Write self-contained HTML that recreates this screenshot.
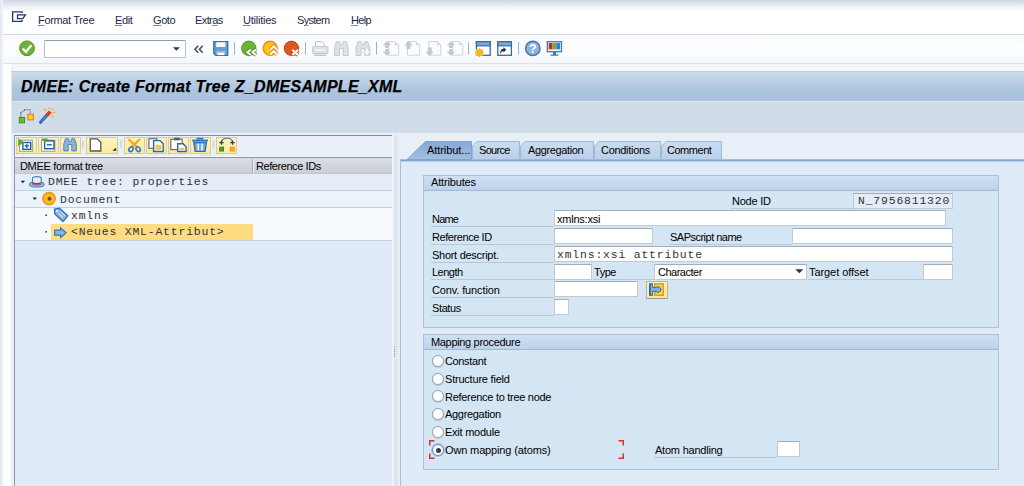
<!DOCTYPE html>
<html>
<head>
<meta charset="utf-8">
<title>DMEE: Create Format Tree Z_DMESAMPLE_XML</title>
<style>
html,body{margin:0;padding:0;}
body{width:1024px;height:486px;overflow:hidden;position:relative;background:#fff;font-family:"Liberation Sans",sans-serif;font-size:11px;color:#000;}
.abs{position:absolute;}
#menubar{left:0;top:0;width:1024px;height:35px;background:linear-gradient(#ced6e5 0px,#dce2ed 3px,#eff2f7 7px,#fff 12px,#fff 100%);}
#menubar .mi{position:absolute;top:14px;font-size:11px;line-height:13px;color:#1c2b4a;white-space:nowrap;}
#menubar u{text-decoration:underline;text-decoration-color:#7d88a3;text-underline-offset:1px;text-decoration-thickness:1px;}
#toolbar{left:0;top:34px;width:1024px;height:30px;background:linear-gradient(#f6f8fb 0,#fefefe 35%,#fbfcfd 70%,#f2f5f9 100%);border-top:1px solid #d3dbe7;border-bottom:1px solid #dde3ec;box-sizing:border-box;}
#leftedge{left:0;top:0;width:4px;height:486px;background:linear-gradient(to right,#dfe5ee,#eef1f6 50%,rgba(255,255,255,0));}
#gap{left:0;top:64px;width:1024px;height:7px;background:linear-gradient(#f1f4f9,#f6f8fb);}
#titlebar{left:11px;top:71px;width:1013px;height:30px;background:linear-gradient(#cfdded 0,#b9cde4 35%,#adc4de 65%,#aac2dd 100%);border-top:1px solid #bccbdd;border-left:1px solid #dde6f0;box-sizing:border-box;}
#title{left:21px;top:78px;font-size:16px;font-weight:bold;font-style:italic;line-height:18px;white-space:nowrap;color:#000;-webkit-text-stroke:0.25px #000;}
#apptb{left:11px;top:101px;width:1013px;height:32px;background:#d0dde9;border-left:1px solid #e3eaf2;border-top:1px solid #dbe5ef;box-sizing:border-box;}
#main{left:11px;top:133px;width:1013px;height:353px;background:#e9eff7;}
#leftwhite{left:2px;top:64px;width:9px;height:422px;background:#fff;}
/* left tree container */
#treebox{left:14px;top:135px;width:379px;height:351px;border-left:1px solid #8a9bb0;border-top:1px solid #7b8da4;box-sizing:border-box;background:#e1ebf7;}
#treetb{left:15px;top:136px;width:378px;height:21px;background:#eaf0f8;box-sizing:border-box;}
.tbtn{position:absolute;top:137px;height:17px;background:linear-gradient(#fef4c3,#fbea9c);border:1px solid #dccb92;box-sizing:border-box;}
#treehdr{left:15px;top:157px;width:377px;height:17px;background:linear-gradient(#8395ab 0,#8395ab 1px,#dddfe5 1px,#c9ced5 100%);border-bottom:1px solid #c0c7d0;box-sizing:border-box;}
.th{position:absolute;top:160px;font-size:11px;line-height:13px;white-space:nowrap;}
.row{position:absolute;left:15px;width:377px;height:17px;box-sizing:border-box;border-bottom:1px solid #bfd0e6;}
.mono{font-family:"Liberation Mono",monospace;font-size:11.4px;letter-spacing:0.84px;line-height:15px;white-space:nowrap;color:#333;position:absolute;}
/* right */
#split{left:392px;top:135px;width:8px;height:351px;background:linear-gradient(to right,#f2f5fa 0,#f2f5fa 1px,#dfe7f1 2px,#dce5ef 5px,#e7edf5 6px,#e8eef6 8px);}
#tabpanel{left:400px;top:159px;width:624px;height:327px;background:linear-gradient(#a3bfe1 0,#a3bfe1 1px,#7fa3d2 1px,#7fa3d2 2px,#bcd1e9 2px,#bcd1e9 3px,#e1ebf7 3px);border-left:1px solid #a9c0dc;box-sizing:border-box;}
.tab{position:absolute;top:140px;height:21px;box-sizing:border-box;font-size:11px;line-height:13px;white-space:nowrap;}
.tabtxt{position:absolute;top:144px;font-size:11px;line-height:13px;white-space:nowrap;color:#000;}
.grp{position:absolute;background:#d4e5f4;border:1px solid #aac2dc;box-sizing:border-box;}
.grph{position:absolute;left:0;top:0;right:0;height:14px;background:linear-gradient(#cfe0f1,#bdd2ea);border-bottom:1px solid #9fb9d6;}
.grpt{position:absolute;font-size:11px;line-height:13px;white-space:nowrap;}
.lbl{position:absolute;font-size:11px;line-height:13px;white-space:nowrap;height:13px;margin-top:1px;border-bottom:1px solid #b9c7d7;box-sizing:content-box;}
.inp{position:absolute;background:#fff;border:1px solid #c1c9d3;border-top-color:#a3adb9;box-sizing:border-box;height:18px;}
.inptxt{position:absolute;font-size:11px;line-height:13px;white-space:nowrap;}
.radio{position:absolute;width:12px;height:12px;border-radius:50%;border:1px solid #9aa3ad;background:#fff;box-sizing:border-box;box-shadow:0 0.500px 0 0.300px rgba(120,130,140,0.35);}
.radio.sel{border-color:#5b8ecb;box-shadow:0 0 0 1px #a9c6e8;}
.radio.sel::after{content:"";position:absolute;left:2.500px;top:2.500px;width:5px;height:5px;border-radius:50%;background:#353a4c;}
.inp.ro{background:#e4edf7;}
.rlbl{position:absolute;font-size:11px;line-height:13px;white-space:nowrap;}
</style>
</head>
<body>
<div id="menubar" class="abs">
  <svg class="abs" style="left:11px;top:10px" width="16" height="13" viewBox="0 0 16 13"><path d="M11.300 1.900 H1.600 V11.400 H11.300 M11 1.300 V3.200 M11 10 V12" fill="none" stroke="#23376b" stroke-width="1.300"/><path d="M6.500 4.800 H14.400 L11.800 8.600 H6.500 Z" fill="none" stroke="#23376b" stroke-width="1.300"/></svg>
  <span class="mi" style="left:38px;letter-spacing:-0.34px"><u>F</u>ormat Tree</span>
  <span class="mi" style="left:115px;letter-spacing:-0.37px"><u>E</u>dit</span>
  <span class="mi" style="left:153px;letter-spacing:-0.42px"><u>G</u>oto</span>
  <span class="mi" style="left:195px;letter-spacing:-0.6px">Extr<u>a</u>s</span>
  <span class="mi" style="left:243px;letter-spacing:-0.23px"><u>U</u>tilities</span>
  <span class="mi" style="left:297px;letter-spacing:-0.7px">S<u>y</u>stem</span>
  <span class="mi" style="left:351px;letter-spacing:-0.66px"><u>H</u>elp</span>
</div>
<div id="toolbar" class="abs"></div>
<div id="gap" class="abs"></div>
<div id="leftwhite" class="abs"></div>
<div id="leftedge" class="abs"></div>
<div id="titlebar" class="abs"></div>
<div id="title" class="abs" style="letter-spacing:0.28px">DMEE: Create Format Tree Z_DMESAMPLE_XML</div>
<div id="apptb" class="abs"></div>
<div id="main" class="abs"></div>
<div id="treebox" class="abs"></div>
<div id="treetb" class="abs"></div>
<div id="treehdr" class="abs"></div><div class="abs" style="left:15px;top:156px;width:378px;height:1px;background:#f5f8fc"></div><div class="abs" style="left:15px;top:157px;width:378px;height:1px;background:#8395ab"></div>
<div class="abs" style="left:252px;top:159px;width:1px;height:14px;background:#a9afb8"></div><div class="abs" style="left:253px;top:159px;width:1px;height:14px;background:#eceef1"></div>
<span class="th" style="left:20px;letter-spacing:-0.33px">DMEE format tree</span>
<span class="th" style="left:256px;letter-spacing:-0.43px">Reference IDs</span>

<!-- tree toolbar buttons -->
<div class="tbtn" style="left:16px;width:21px"></div>
<div class="tbtn" style="left:38px;width:21px"></div>
<div class="tbtn" style="left:60px;width:21px"></div>
<div class="tbtn" style="left:86px;width:32px"></div>
<div class="tbtn" style="left:124px;width:21px"></div>
<div class="tbtn" style="left:146px;width:21px"></div>
<div class="tbtn" style="left:168px;width:21px"></div>
<div class="tbtn" style="left:190px;width:21px"></div>
<div class="tbtn" style="left:216px;width:21px"></div>
<svg class="abs" style="left:14px;top:134px" width="230" height="24" viewBox="0 0 230 24">
  <path d="M69 6.500 V14.500 M107 6.500 V14.500 M199.500 6.500 V14.500" stroke="#d3d9e1" stroke-width="2"/>
  <path d="M186 21.500 H197" stroke="#b8c2ce" stroke-width="1" stroke-dasharray="1 1.500"/>
  <!-- expand -->
  <rect x="5.600" y="6.200" width="12.800" height="11" fill="#fff" stroke="#8e98a5" stroke-width="1"/>
  <rect x="8.900" y="8.500" width="7.800" height="6.800" fill="#fff" stroke="#1f5fa8" stroke-width="1.400"/>
  <path d="M10.600 11.900 H15 M12.800 9.800 V14" stroke="#1f5fa8" stroke-width="1.400"/>
  <path d="M4.200 4.200 L9.800 8.200 L4.200 12.200 Z" fill="#5aa82c"/>
  <!-- collapse -->
  <rect x="27.600" y="6.200" width="13.200" height="11" fill="#fff" stroke="#8e98a5" stroke-width="1"/>
  <rect x="30.600" y="6.900" width="9.400" height="7.800" fill="#fff" stroke="#1f5fa8" stroke-width="1.400"/>
  <path d="M32.800 10.800 H37.800" stroke="#1f5fa8" stroke-width="1.400"/>
  <path d="M27.200 4.400 H34.400 L30.800 8.800 Z" fill="#5aa82c"/>
  <!-- find -->
  <path d="M49.800 16.900 V10 L51.500 4.800 H54.500 L55 7.500 H57 L57.500 4.800 H60.500 L62.300 10 V16.900 H57.800 V10.500 H54.200 V16.900 Z" fill="#8db3dc" stroke="#4a84c4" stroke-width="1"/>
  <!-- create doc -->
  <path d="M76.300 4.800 H83.300 L86.800 8.300 V17 H76.300 Z" fill="#fff" stroke="#55585d" stroke-width="1.300"/>
  <path d="M102.200 13.700 V16.700 H98.400 Z" fill="#222"/>
  <!-- cut -->
  <path d="M114.500 5 L123 13.200 M126 5 L117.500 13.200" stroke="#f6a81c" stroke-width="2.300"/>
  <ellipse cx="117" cy="15.200" rx="1.900" ry="2.600" fill="#dfeaf6" stroke="#2f72b8" stroke-width="1.500" transform="rotate(40 117 15.200)"/>
  <ellipse cx="124.200" cy="15.200" rx="1.900" ry="2.600" fill="#dfeaf6" stroke="#2f72b8" stroke-width="1.500" transform="rotate(-40 124.200 15.200)"/>
  <!-- copy -->
  <rect x="134.900" y="4.700" width="8" height="9.600" fill="#fff" stroke="#6b6d72" stroke-width="1.200"/>
  <path d="M139.600 6.600 H146 L149.200 9.800 V17.500 H139.600 Z" fill="#fff" stroke="#2469ae" stroke-width="1.400"/>
  <path d="M141.400 10.800 H147.400 V15.900 H141.400 Z" fill="#f9c54a"/>
  <!-- paste -->
  <rect x="156.800" y="5.300" width="11.400" height="10.300" fill="#fff" stroke="#6b6d72" stroke-width="1.200"/>
  <rect x="160" y="3.700" width="5.700" height="2.600" fill="#55585e"/>
  <path d="M163.700 9.700 H169 L172.100 12.800 V17.500 H163.700 Z" fill="#fff" stroke="#2469ae" stroke-width="1.400"/>
  <path d="M165.400 13.600 H170.400 V16.200 H165.400 Z" fill="#f9c54a"/>
  <!-- trash -->
  <path d="M178.200 6.600 H193.900" stroke="#2f6eb2" stroke-width="2"/>
  <path d="M182.500 4.600 H189.500" stroke="#2f6eb2" stroke-width="1.600"/>
  <path d="M179.900 8.600 L181.200 17.400 H191 L192.400 8.600 Z" fill="#7fabd8" stroke="#2f6eb2" stroke-width="1.400"/>
  <path d="M184.300 9.500 V16.500 M188 9.500 V16.500" stroke="#f2f6fb" stroke-width="1.500"/>
  <!-- relation -->
  <path d="M207.500 8.600 C207.500 2.800 218.500 2.800 218.500 8.600" fill="none" stroke="#6b6d72" stroke-width="1.200"/>
  <path d="M205.300 8.600 H209.700 M207.500 6.400 V10.800 M216.300 8.600 H220.700 M218.500 6.400 V10.800" stroke="#3a3d43" stroke-width="1.300"/>
  <rect x="205.700" y="13.200" width="3.800" height="3.800" fill="#5aa82c" stroke="#3f7e1e" stroke-width="1"/>
  <rect x="216.400" y="13.200" width="3.800" height="3.800" fill="#f9b41a" stroke="#ec8b1c" stroke-width="1"/>
</svg>

<!-- tree rows -->
<div class="row" style="top:174px;height:17px;background:#e5edf8"></div>
<div class="row" style="top:191px;height:17px;background:#edf3fb"></div>
<div class="row" style="top:208px;height:16px;background:#f6f9fe;border-bottom:none"></div>
<div class="row" style="top:224px;height:17px;background:#f6f9fe"></div>
<div class="abs" style="left:51px;top:224px;width:202px;height:16px;background:#fedc82"></div>
<svg class="abs" style="left:15px;top:174px" width="70" height="67" viewBox="0 0 70 67">
  <path d="M5.700 6.800 H10 L7.850 9.200 Z" fill="#222"/>
  <path d="M17.600 23.500 H21.900 L19.750 25.900 Z" fill="#222"/>
  <rect x="30.400" y="40.500" width="1.500" height="1.500" fill="#333"/>
  <rect x="30.400" y="57.100" width="1.500" height="1.500" fill="#333"/>
  <!-- hat icon -->
  <ellipse cx="21.800" cy="10.400" rx="7.200" ry="2.600" fill="#a9c6e6" stroke="#3f7abd" stroke-width="1.100"/>
  <path d="M17.500 10 V4 C17.500 2.200 26.200 2.200 26.200 4 V10 C26.200 11.300 17.500 11.300 17.500 10 Z" fill="#e4eef9" stroke="#3f7abd" stroke-width="1.100"/>
  <path d="M18 8.300 C20 9.300 23.700 9.300 25.700 8.300 V10.100 C23.700 11.100 20 11.100 18 10.100 Z" fill="#d8231f"/>
  <!-- document circle -->
  <circle cx="34" cy="24.600" r="6.200" fill="#fbbd1a" stroke="#f0901e" stroke-width="1.500"/>
  <circle cx="34.500" cy="24.700" r="2" fill="#5f564c"/>
  <!-- tag -->
  <path d="M39.500 35.200 L44.500 34.300 L52.800 41.800 L48 47.600 L39.800 40 Z" fill="#8db3dc" stroke="#2f6db3" stroke-width="1.300"/>
  <path d="M43.500 39.500 L48 43.700 M45.600 37.700 L50 41.800" stroke="#eef4fb" stroke-width="1"/>
  <circle cx="42.200" cy="37" r="1" fill="#fff"/>
  <!-- arrow -->
  <path d="M39.700 56.200 H45.600 V54 L51.200 58.700 L45.600 63.400 V61.200 H39.700 Z" fill="#8db5df" stroke="#3a78bd" stroke-width="1.200"/>
</svg>
<span class="mono" style="left:48px;top:175.300px">DMEE tree: properties</span>
<span class="mono" style="left:60px;top:192.500px">Document</span>
<span class="mono" style="left:71px;top:208.800px">xmlns</span>
<span class="mono" style="left:71px;top:225.300px">&lt;Neues XML-Attribut&gt;</span>
<div id="split" class="abs"></div>
<svg class="abs" style="left:393px;top:346px" width="4" height="13" viewBox="0 0 4 13"><path d="M1 1 h1.300 M1 3.300 h1.300 M1 5.600 h1.300 M1 7.900 h1.300 M1 10.200 h1.300" stroke="#9aa5b3" stroke-width="1.200"/><path d="M2.300 1.800 h1 M2.300 4.100 h1 M2.300 6.400 h1 M2.300 8.700 h1 M2.300 11 h1" stroke="#f7f9fc" stroke-width="1"/></svg>
<div id="tabpanel" class="abs"></div>


<!-- toolbar icons -->
<svg class="abs" style="left:0;top:35px" width="600" height="28" viewBox="0 0 600 28">
  <!-- OK check -->
  <circle cx="27" cy="13.300" r="7.400" fill="#6db33a" stroke="#578f2e" stroke-width="1"/>
  <path d="M22.800 13.600 L26 16.800 L31.300 10.200" fill="none" stroke="#fff" stroke-width="2.300"/>
  <!-- command field -->
  <rect x="44.500" y="5.500" width="141" height="17" fill="#fff" stroke="#b9c0ca"/>
  <path d="M45 5.500 H185" stroke="#929caa" stroke-width="1"/>
  <path d="M173 12.300 H179.800 L176.400 15.800 Z" fill="#1f3566"/>
  <!-- << -->
  <path d="M198.200 10.700 L195 14.200 L198.200 17.700 M202.700 10.700 L199.500 14.200 L202.700 17.700" fill="none" stroke="#545b68" stroke-width="1.700"/>
  <!-- save -->
  <path d="M213.800 6.600 H227.700 V20.200 H215.800 L213.800 18.200 Z" fill="#6d9cd0" stroke="#3a74b0" stroke-width="1.400"/>
  <rect x="216.200" y="7.200" width="9.300" height="4.800" fill="#f4f8fc"/>
  <rect x="216.400" y="16" width="9" height="4" fill="#9dbfe3"/>
  <rect x="217.800" y="17.800" width="6.200" height="2.300" fill="#fff"/>
  <!-- sep -->
  <path d="M234.500 7 V19.500 M305.500 7 V19.500 M376.500 7 V19.500 M468.500 7 V19.500 M518.500 7 V19.500" stroke="#8fb3dc" stroke-width="1"/>
  <!-- back green -->
  <circle cx="248.800" cy="13.300" r="7.200" fill="#6ab42f" stroke="#55962b" stroke-width="1"/>
  <path d="M250.800 14.600 L247.300 17.300 L250.800 20 M256 14.600 L252.500 17.300 L256 20" fill="none" stroke="#4e8f2a" stroke-width="3.800" stroke-linejoin="miter"/>
  <path d="M250.800 14.600 L247.300 17.300 L250.800 20 M256 14.600 L252.500 17.300 L256 20" fill="none" stroke="#fff" stroke-width="2"/>
  <!-- exit orange -->
  <circle cx="270.200" cy="13.300" r="7" fill="#fcc419" stroke="#f0901e" stroke-width="1.500"/>
  <path d="M270.200 14.800 L273.700 11.300 L277.200 14.800 M270.200 19.600 L273.700 16.100 L277.200 19.600" fill="none" stroke="#ee8f1e" stroke-width="3.800"/>
  <path d="M270.200 14.800 L273.700 11.300 L277.200 14.800 M270.200 19.600 L273.700 16.100 L277.200 19.600" fill="none" stroke="#fff" stroke-width="1.900"/>
  <!-- cancel red -->
  <circle cx="291.400" cy="13.300" r="7.200" fill="#d9581e" stroke="#cc431c" stroke-width="1"/>
  <path d="M292.400 14.800 L298 20.100 M298 14.800 L292.400 20.100" fill="none" stroke="#cf4a1c" stroke-width="4"/>
  <path d="M292.400 14.800 L298 20.100 M298 14.800 L292.400 20.100" fill="none" stroke="#fff" stroke-width="2.100"/>
  <!-- print (grey) -->
  <g fill="#dfe1e5" stroke="#c4c8cd" stroke-width="1">
    <path d="M315.500 11.500 V6.500 H322 L324.500 9 V11.500 Z" fill="#f7f8f9"/>
    <rect x="312.500" y="11.500" width="15.500" height="7" rx="1.200"/>
    <path d="M314 20.200 H326.500" stroke="#b9bdc3" stroke-width="1.300"/>
    <path d="M315 15 H325" stroke="#f3f4f6" stroke-width="2"/>
    <!-- binoculars -->
    <path d="M334.500 20.500 V12.500 L336.500 6.700 H339.700 L340.500 9.500 H342.300 L343 6.700 H346.200 L348.200 12.500 V20.500 H343.200 V13.500 H339.500 V20.500 Z"/>
    <path d="M356 20.500 V12.500 L358 6.700 H361.200 L362 9.500 H363.800 L364.500 6.700 H367.700 L369.700 12.500 V20.500 H364.700 V13.500 H361 V20.500 Z"/>
    <path d="M365.700 13 h2.600 v2.400 h2.400 v2.600 h-2.400 v2.400 h-2.600 v-2.400 h-2.400 v-2.600 h2.400 z" fill="#f7f8f9" stroke="#d3d6da" stroke-width="0.800"/>
    <!-- pages -->
    <path d="M388.500 6.500 H395 L398.700 10.200 V20.200 H388.500 Z" fill="#fbfbfc" stroke="#cfd2d6"/>
    <path d="M407.500 6.500 H416 L419.700 10.200 V20.200 H407.500 Z" fill="#fbfbfc" stroke="#cfd2d6"/>
    <path d="M428.800 6.500 H437.200 L440.900 10.200 V20.200 H428.800 Z" fill="#fbfbfc" stroke="#cfd2d6"/>
    <path d="M452.600 6.500 H459.200 L462.900 10.200 V20.200 H452.600 Z" fill="#fbfbfc" stroke="#cfd2d6"/>
  </g>
  <g fill="#c6c8cc">
    <path d="M395 6.500 L398.700 10.200 H395 Z M416 6.500 L419.700 10.200 H416 Z M437.200 6.500 L440.900 10.200 H437.200 Z M459.200 6.500 L462.900 10.200 H459.200 Z" fill="#d5d7da"/>
    <path d="M387 6 L391.300 10.300 H389 V13 H385 V10.300 H382.700 Z M387 21 L391.300 16.700 H389 V14 H385 V16.700 H382.700 Z"/>
    <path d="M408.400 6 L412.700 10.300 H410.400 V14 H406.400 V10.300 H404.100 Z"/>
    <path d="M429.700 21 L434 16.700 H431.700 V12.500 H427.700 V16.700 H425.400 Z"/>
    <path d="M451 6 L455.300 10.300 H453 V13 H449 V10.300 H446.700 Z M451 21 L455.300 16.700 H453 V14 H449 V16.700 H446.700 Z"/>
  </g>
  <!-- window new -->
  <rect x="476.400" y="6.700" width="13.800" height="13.600" fill="#fff" stroke="#2f6aa8" stroke-width="1.300"/>
  <rect x="476.400" y="6.700" width="13.800" height="4.200" fill="#7ba3d3" stroke="#2f6aa8" stroke-width="1.100"/>
  <circle cx="479.400" cy="17.700" r="4.400" fill="#f4f7fb"/>
  <path d="M479.400 13.400 L480.500 15 L482.400 14.700 L482.100 16.600 L483.700 17.700 L482.100 18.800 L482.400 20.700 L480.500 20.400 L479.400 22 L478.300 20.400 L476.400 20.700 L476.700 18.800 L475.100 17.700 L476.700 16.600 L476.400 14.700 L478.300 15 Z" fill="#fdb913" stroke="#f6a01a" stroke-width="0.700"/>
  <!-- window shortcut -->
  <rect x="497.800" y="6.700" width="13.600" height="13.600" fill="#fff" stroke="#2f6aa8" stroke-width="1.300"/>
  <rect x="497.800" y="6.700" width="13.600" height="4.200" fill="#7ba3d3" stroke="#2f6aa8" stroke-width="1.100"/>
  <path d="M500 19 C500 15.500 501.500 13.800 503.500 13.800 V12.200 L506.300 14.800 L503.500 17.400 V15.900 C502.300 15.900 501.200 17 500 19 Z" fill="#2b2f3a"/>
  <!-- help -->
  <circle cx="532.800" cy="13.400" r="7.200" fill="#8fb2db" stroke="#3f78b5" stroke-width="1.500"/>
  <text x="532.800" y="18" font-family="Liberation Sans, sans-serif" font-size="12.500" font-weight="bold" fill="#fff" text-anchor="middle">?</text>
  <!-- monitor -->
  <rect x="547.300" y="6.700" width="14.200" height="10" fill="#eef3f9" stroke="#3f78b5" stroke-width="1.300"/>
  <rect x="548.700" y="8" width="3.800" height="6.300" fill="#d9231c"/>
  <rect x="552.500" y="8" width="3.800" height="6.300" fill="#6ab42f"/>
  <rect x="556.300" y="8" width="3.800" height="6.300" fill="#2f80cf"/>
  <path d="M553 17 H556 V19.500 H558.500 V20.800 H550.500 V19.500 H553 Z" fill="#3f78b5"/>
</svg>

<!-- app toolbar icons -->
<svg class="abs" style="left:18px;top:105px" width="40" height="22" viewBox="0 0 40 22">
  <path d="M2.700 12 V7.800 L7.200 4.700 H12.200 V8.800" fill="none" stroke="#8a939e" stroke-width="1.100"/>
  <path d="M6.500 4.200 V5.800 M2 8 H3.400" stroke="#5d6672" stroke-width="1"/>
  <rect x="1.300" y="12.400" width="5.200" height="5.400" fill="#76b82a" stroke="#3f8a23" stroke-width="1"/>
  <rect x="9.900" y="9.400" width="5.400" height="5.400" fill="#fdd430" stroke="#ee8a22" stroke-width="1.400"/>
  <path d="M22.600 17.200 L29 10.200" stroke="#2a6fae" stroke-width="3.200" stroke-linecap="round"/>
  <path d="M23.200 16.500 L28.300 11" stroke="#6da3d6" stroke-width="0.800"/>
  <path d="M28.700 10.500 L32.300 6.600" stroke="#d8392b" stroke-width="3.600"/>
  <path d="M26 4.500 L28.500 5.200 M33.500 3.500 L34.500 5 M35 7.800 L37 7.200 M33.800 10 L34.800 12 M31 3 V4.200" stroke="#f9b233" stroke-width="1.300" stroke-linecap="round"/>
</svg>
<!-- tabs -->
<svg class="abs" style="left:399px;top:138px" width="340" height="24" viewBox="0 0 340 24">
  <defs>
    <linearGradient id="gAct" x1="0" y1="0" x2="0" y2="1"><stop offset="0" stop-color="#84a8d6"/><stop offset="1" stop-color="#a3bfe1"/></linearGradient>
    <linearGradient id="gTab" x1="0" y1="0" x2="0" y2="1"><stop offset="0" stop-color="#cadcf0"/><stop offset="1" stop-color="#b9d0e9"/></linearGradient>
  </defs>
  <path d="M8 21.500 L26.500 3.500 H72.500 V21.500 Z" fill="url(#gAct)" stroke="#7fa3d2" stroke-width="1"/>
  <path d="M73.500 21.500 V8 L78 3.500 H120.500 V21.500 Z" fill="url(#gTab)" stroke="#9fb9d8" stroke-width="1"/>
  <path d="M121.500 21.500 V8 L126 3.500 H194.500 V21.500 Z" fill="url(#gTab)" stroke="#9fb9d8" stroke-width="1"/>
  <path d="M195.500 21.500 V8 L200 3.500 H261.500 V21.500 Z" fill="url(#gTab)" stroke="#9fb9d8" stroke-width="1"/>
  <path d="M262.500 21.500 V8 L267 3.500 H322.500 V21.500 Z" fill="url(#gTab)" stroke="#9fb9d8" stroke-width="1"/>
</svg>
<span class="tabtxt" style="left:427px;letter-spacing:-0.08px">Attribut...</span>
<span class="tabtxt" style="left:479px;letter-spacing:-0.69px">Source</span>
<span class="tabtxt" style="left:528px;letter-spacing:-0.36px">Aggregation</span>
<span class="tabtxt" style="left:601px;letter-spacing:-0.3px">Conditions</span>
<span class="tabtxt" style="left:667px;letter-spacing:-0.47px">Comment</span>

<!-- group 1 -->
<div class="grp" style="left:423px;top:175px;width:576px;height:153px"><div class="grph"></div></div>
<span class="grpt" style="left:431px;top:176px;letter-spacing:-0.16px">Attributes</span>

<span class="lbl" style="left:731px;top:194px;width:122px;letter-spacing:-0.24px"><span style="margin-left:1px">Node ID</span></span>
<div class="inp ro" style="left:853px;top:193px;width:100px;height:16px"></div>
<span class="mono" style="left:858px;top:194px">N_7956811320</span>

<span class="lbl" style="left:431px;top:212px;width:123px;letter-spacing:-0.79px"><span style="margin-left:1px">Name</span></span>
<div class="inp" style="left:554px;top:210px;width:392px;height:16px"></div>
<span class="inptxt" style="left:557px;top:213px;letter-spacing:-0.23px">xmlns:xsi</span>

<span class="lbl" style="left:431px;top:230px;width:123px;letter-spacing:-0.42px"><span style="margin-left:1px">Reference ID</span></span>
<div class="inp" style="left:554px;top:228px;width:99px;height:16px"></div>
<span class="lbl" style="left:669px;top:230px;width:123px;letter-spacing:-0.51px"><span style="margin-left:1px">SAPscript name</span></span>
<div class="inp" style="left:792px;top:228px;width:161px;height:16px"></div>

<span class="lbl" style="left:431px;top:248px;width:123px;letter-spacing:-0.28px"><span style="margin-left:1px">Short descript.</span></span>
<div class="inp" style="left:554px;top:246px;width:399px;height:16px"></div>
<span class="mono" style="left:557px;top:247.500px">xmlns:xsi attribute</span>

<span class="lbl" style="left:431px;top:265px;width:123px;letter-spacing:-0.51px"><span style="margin-left:1px">Length</span></span>
<div class="inp" style="left:554px;top:264px;width:38px;height:16px"></div>
<span class="lbl" style="left:593px;top:265px;width:61px;letter-spacing:-0.47px"><span style="margin-left:1px">Type</span></span>
<div class="inp" style="left:654px;top:264px;width:153px;height:16px"></div>
<span class="inptxt" style="left:658px;top:266px;letter-spacing:-0.5px">Character</span>
<svg class="abs" style="left:795px;top:269px" width="9" height="5" viewBox="0 0 9 5"><path d="M0.300 0.300 H8.300 L4.300 4.300 Z" fill="#1f3566"/></svg>
<span class="lbl" style="left:808px;top:265px;width:115px;letter-spacing:-0.07px"><span style="margin-left:1px">Target offset</span></span>
<div class="inp" style="left:923px;top:264px;width:30px;height:16px"></div>

<span class="lbl" style="left:431px;top:283px;width:123px;letter-spacing:-0.13px"><span style="margin-left:1px">Conv. function</span></span>
<div class="inp" style="left:554px;top:281px;width:84px;height:16px"></div>
<div class="abs" id="convbtn" style="left:646px;top:281px;width:22px;height:18px;background:linear-gradient(#fef3bd,#fbe89a);border:1px solid #bdb592;border-bottom-color:#9c9a8a;box-sizing:border-box"></div>
<svg class="abs" style="left:649px;top:283px" width="16" height="14" viewBox="0 0 16 14">
  <rect x="5.800" y="0.800" width="8.400" height="11.400" fill="#fdd648" stroke="#f09a1c" stroke-width="1.600"/>
  <path d="M0.800 0.600 H3.600 V4.600 H7 A2.800 2.800 0 1 1 7 8.400 H3.600 V12.400 H0.800 Z" fill="#7fb0e0" stroke="#2a6fb0" stroke-width="1"/>
  <path d="M0.800 0.600 V12.400" stroke="#1f62a5" stroke-width="1.400"/>
</svg>

<span class="lbl" style="left:431px;top:301px;width:123px;letter-spacing:-0.38px"><span style="margin-left:1px">Status</span></span>
<div class="inp" style="left:554px;top:299px;width:15px;height:16px"></div>

<!-- group 2 -->
<div class="grp" style="left:423px;top:334px;width:576px;height:136px"><div class="grph"></div></div>
<span class="grpt" style="left:431px;top:336px;letter-spacing:-0.33px">Mapping procedure</span>

<div class="radio" style="left:432px;top:355px"></div><span class="rlbl" style="left:445px;top:355px;letter-spacing:-0.37px">Constant</span>
<div class="radio" style="left:432px;top:373px"></div><span class="rlbl" style="left:445px;top:373px;letter-spacing:-0.21px">Structure field</span>
<div class="radio" style="left:432px;top:390px"></div><span class="rlbl" style="left:445px;top:391px;letter-spacing:-0.29px">Reference to tree node</span>
<div class="radio" style="left:432px;top:408px"></div><span class="rlbl" style="left:445px;top:408px;letter-spacing:-0.31px">Aggregation</span>
<div class="radio" style="left:432px;top:426px"></div><span class="rlbl" style="left:445px;top:426px;letter-spacing:-0.24px">Exit module</span>
<div class="radio sel" style="left:432px;top:444px"></div><span class="rlbl" style="left:445px;top:444px;letter-spacing:-0.14px">Own mapping (atoms)</span>
<svg class="abs" style="left:429px;top:440px" width="196" height="19" viewBox="0 0 196 19">
  <path d="M5.500 0.750 H0.750 V5.500 M0.750 13.500 V18.250 H5.500 M189.500 0.750 H194.250 V5.500 M194.250 13.500 V18.250 H189.500" fill="none" stroke="#d4342a" stroke-width="1.500"/>
</svg>
<span class="lbl" style="left:654px;top:443px;width:123px;letter-spacing:-0.22px"><span style="margin-left:1px">Atom handling</span></span>
<div class="inp" style="left:777px;top:441px;width:23px;height:16px"></div>
</body>
</html>
